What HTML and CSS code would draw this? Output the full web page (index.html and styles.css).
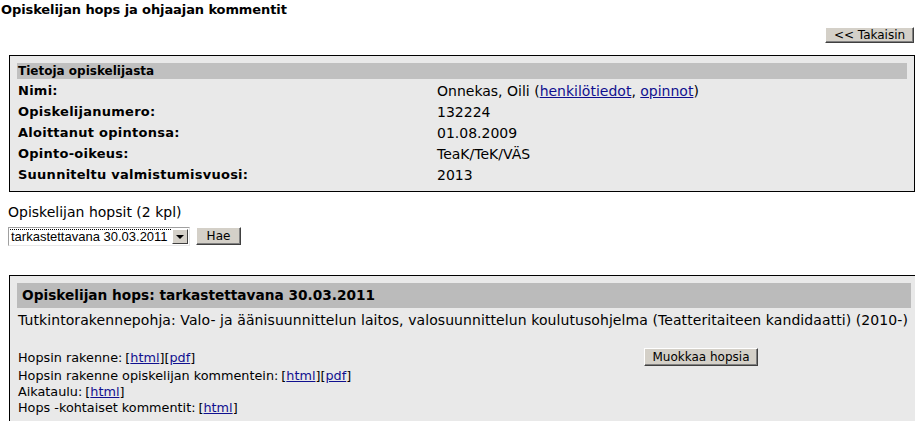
FILE: index.html
```html
<!DOCTYPE html>
<html lang="fi">
<head>
<meta charset="utf-8">
<title>Opiskelijan hops ja ohjaajan kommentit</title>
<link rel="stylesheet" href="styles.css">
</head>
<body>
<h1 class="title">Opiskelijan hops ja ohjaajan kommentit</h1>
<div class="toolbar">
  <button class="btn btn-back" type="button">&lt;&lt; Takaisin</button>
</div>

<div class="box info-box">
  <div class="box-header small">Tietoja opiskelijasta</div>
  <div class="info-grid">
    <div class="label">Nimi:</div>
    <div class="value">Onnekas, Oili (<a href="#">henkilötiedot</a>, <a href="#">opinnot</a>)</div>
    <div class="label">Opiskelijanumero:</div>
    <div class="value">132224</div>
    <div class="label">Aloittanut opintonsa:</div>
    <div class="value">01.08.2009</div>
    <div class="label">Opinto-oikeus:</div>
    <div class="value">TeaK/TeK/VÄS</div>
    <div class="label">Suunniteltu valmistumisvuosi:</div>
    <div class="value">2013</div>
  </div>
</div>

<div class="hops-select">
  <div class="hops-label">Opiskelijan hopsit (2 kpl)</div>
  <div class="select-row">
    <div class="select-box">
      <span class="select-text"><span class="focus">tarkastettavana 30.03.2011</span></span>
      <span class="select-arrow"><span class="tri"></span></span>
    </div>
    <button class="btn btn-hae" type="button">Hae</button>
  </div>
</div>

<div class="box hops-box">
  <div class="box-header large">Opiskelijan hops: tarkastettavana 30.03.2011</div>
  <div class="desc">Tutkintorakennepohja: Valo- ja äänisuunnittelun laitos, valosuunnittelun koulutusohjelma (Teatteritaiteen kandidaatti) (2010-)</div>
  <div class="links-grid">
    <div class="link-row first">Hopsin rakenne:<span class="refs">[<a href="#">html</a>][<a href="#">pdf</a>]</span></div>
    <div class="edit-cell"><button class="btn btn-edit" type="button">Muokkaa hopsia</button></div>
    <div class="link-row">Hopsin rakenne opiskelijan kommentein:<span class="refs">[<a href="#">html</a>][<a href="#">pdf</a>]</span></div>
    <div class="link-row">Aikataulu:<span class="refs">[<a href="#">html</a>]</span></div>
    <div class="link-row">Hops -kohtaiset kommentit:<span class="refs">[<a href="#">html</a>]</span></div>
  </div>
</div>
</body>
</html>
```

FILE: styles.css
```css
html, body {
  overflow-x: hidden;
}
body {
  margin: 0;
  font-family: "DejaVu Sans", Verdana, sans-serif;
  font-size: 14px;
  color: #000;
  background: #fff;
}
a {
  color: #10108f;
  text-decoration: underline;
}
.title {
  margin: 0;
  padding: 2px 0 0 1px;
  font-size: 13px;
  font-weight: bold;
  line-height: 16px;
  letter-spacing: -0.1px;
}
.toolbar {
  display: flex;
  justify-content: flex-end;
  margin-top: 9px;
  padding-right: 1px;
}
.btn {
  font-family: "DejaVu Sans", Verdana, sans-serif;
  font-size: 12px;
  color: #000;
  background: #d4d0c8;
  border: 1px solid;
  border-color: #ffffff #404040 #404040 #ffffff;
  box-shadow: inset -1px -1px 0 #808080;
  padding: 0;
  margin: 0;
  display: flex;
  align-items: center;
  justify-content: center;
  box-sizing: border-box;
}
.btn-back {
  width: 89px;
  height: 16px;
  line-height: 14px;
}
.box {
  border: 1px solid #000;
  background: #e9e9e9;
  padding: 7px;
  box-sizing: border-box;
}
.info-box {
  margin: 12px 0 0 9px;
  padding-bottom: 6px;
}
.box-header {
  font-weight: bold;
}
.box-header.small {
  background: #c0c0c0;
  height: 16px;
  line-height: 16px;
  font-size: 12px;
  padding-left: 1px;
}
.info-grid {
  display: grid;
  grid-template-columns: 420px 1fr;
  grid-auto-rows: 21px;
  align-items: center;
  margin-top: 1px;
}
.label {
  font-weight: bold;
  font-size: 13px;
  letter-spacing: 0.25px;
  padding-left: 1px;
}
.hops-select {
  margin: 12px 0 0 8px;
}
.hops-label {
  line-height: 16px;
}
.select-row {
  display: flex;
  align-items: flex-start;
  gap: 6px;
  margin-top: 7px;
}
.select-box {
  width: 182px;
  height: 19px;
  box-sizing: border-box;
  background: #fff;
  border: 1px solid;
  border-color: #a0a0a0 #e8e8e8 #e8e8e8 #a0a0a0;
  display: flex;
  align-items: stretch;
  padding: 1px;
}
.select-text {
  flex: 1;
  display: flex;
  align-items: center;
  font-family: "Liberation Sans", Arial, sans-serif;
  font-size: 13px;
  overflow: hidden;
  white-space: nowrap;
}
.select-text .focus {
  flex: 1;
  outline: 1px dotted #000;
  outline-offset: 0;
  padding-left: 1px;
  line-height: 14px;
}
.select-arrow {
  width: 16px;
  background: #d4d0c8;
  border: 1px solid;
  border-color: #ffffff #404040 #404040 #ffffff;
  box-sizing: border-box;
  display: flex;
  align-items: center;
  justify-content: center;
}
.tri {
  width: 0;
  height: 0;
  border-left: 4px solid transparent;
  border-right: 4px solid transparent;
  border-top: 4px solid #000;
}
.btn-hae {
  width: 45px;
  height: 18px;
}
.hops-box {
  margin: 29px 0 0 9px;
  width: 910px;
  padding-bottom: 20px;
}
.box-header.large {
  background: #bbbbbb;
  height: 25px;
  line-height: 25px;
  font-size: 13.7px;
  padding-left: 5px;
}
.desc {
  padding: 1px 0 0 1px;
  line-height: 22px;
  white-space: nowrap;
  letter-spacing: 0.08px;
}
.links-grid {
  margin-top: 16px;
  display: grid;
  grid-template-columns: 627px auto;
  grid-template-rows: 20px;
  grid-auto-rows: 16px;
  align-items: center;
  font-size: 12.8px;
}
.link-row {
  grid-column: 1;
  padding-left: 1px;
  white-space: nowrap;
}
.refs {
  margin-left: 3px;
}
.edit-cell {
  grid-column: 2;
  grid-row: 1;
  display: flex;
  align-items: center;
}
.btn-edit {
  width: 114px;
  height: 18px;
}
```
